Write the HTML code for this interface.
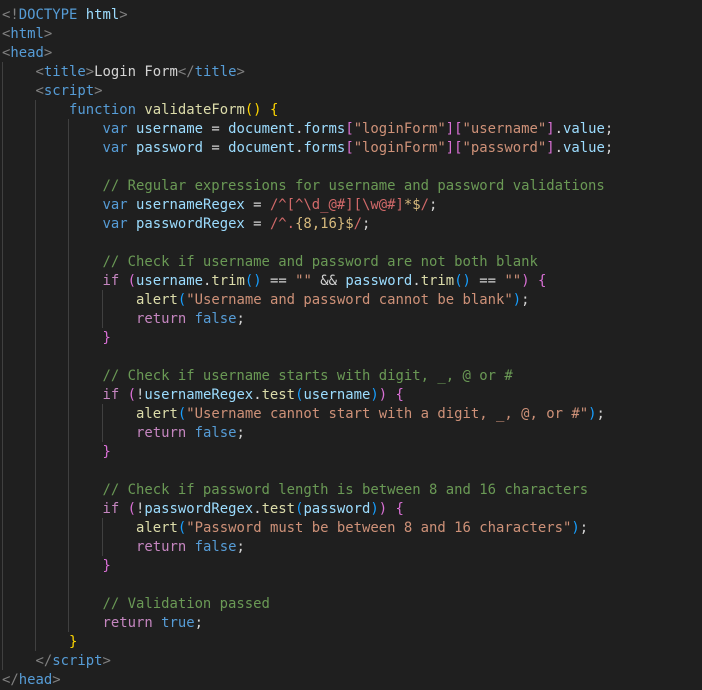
<!DOCTYPE html>
<html><head><style>
html,body{margin:0;background:#1f1f1f;width:702px;height:690px;overflow:hidden}
pre{margin:0;position:absolute;top:6px;left:2px;font-family:"DejaVu Sans Mono","Liberation Mono",monospace;font-size:13.92px;line-height:19px;color:#d4d4d4}
.g{position:absolute;width:1px;background:#404040}
.p{color:#808080}.t{color:#569cd6}.k{color:#569cd6}.f{color:#dcdcaa}.v{color:#9cdcfe}.c{color:#6a9955}.s{color:#ce9178}.r{color:#d16969}.q{color:#d7ba7d}.m{color:#c586c0}.y{color:#ffd700}.o{color:#da70d6}.b{color:#179fff}.w{color:#d4d4d4}
</style></head><body>
<div class="g" style="left:2px;top:62px;height:608px"></div>
<div class="g" style="left:35px;top:100px;height:551px"></div>
<div class="g" style="left:68px;top:119px;height:513px"></div>
<div class="g" style="left:102px;top:290px;height:38px"></div>
<div class="g" style="left:102px;top:404px;height:38px"></div>
<div class="g" style="left:102px;top:518px;height:38px"></div>
<pre><span class="p">&lt;!</span><span class="t">DOCTYPE</span> <span class="v">html</span><span class="p">&gt;</span>
<span class="p">&lt;</span><span class="t">html</span><span class="p">&gt;</span>
<span class="p">&lt;</span><span class="t">head</span><span class="p">&gt;</span>
    <span class="p">&lt;</span><span class="t">title</span><span class="p">&gt;</span>Login Form<span class="p">&lt;/</span><span class="t">title</span><span class="p">&gt;</span>
    <span class="p">&lt;</span><span class="t">script</span><span class="p">&gt;</span>
        <span class="k">function</span> <span class="f">validateForm</span><span class="y">()</span> <span class="y">{</span>
            <span class="k">var</span> <span class="v">username</span> = <span class="v">document</span>.<span class="v">forms</span><span class="o">[</span><span class="s">"loginForm"</span><span class="o">][</span><span class="s">"username"</span><span class="o">]</span>.<span class="v">value</span>;
            <span class="k">var</span> <span class="v">password</span> = <span class="v">document</span>.<span class="v">forms</span><span class="o">[</span><span class="s">"loginForm"</span><span class="o">][</span><span class="s">"password"</span><span class="o">]</span>.<span class="v">value</span>;

            <span class="c">// Regular expressions for username and password validations</span>
            <span class="k">var</span> <span class="v">usernameRegex</span> = <span class="r">/^[^\d_@#][\w@#]</span><span class="q">*$</span><span class="r">/</span>;
            <span class="k">var</span> <span class="v">passwordRegex</span> = <span class="r">/^.</span><span class="q">{8,16}$</span><span class="r">/</span>;

            <span class="c">// Check if username and password are not both blank</span>
            <span class="m">if</span> <span class="o">(</span><span class="v">username</span>.<span class="f">trim</span><span class="b">()</span> == <span class="s">""</span> &amp;&amp; <span class="v">password</span>.<span class="f">trim</span><span class="b">()</span> == <span class="s">""</span><span class="o">)</span> <span class="o">{</span>
                <span class="f">alert</span><span class="b">(</span><span class="s">"Username and password cannot be blank"</span><span class="b">)</span>;
                <span class="m">return</span> <span class="k">false</span>;
            <span class="o">}</span>

            <span class="c">// Check if username starts with digit, _, @ or #</span>
            <span class="m">if</span> <span class="o">(</span>!<span class="v">usernameRegex</span>.<span class="f">test</span><span class="b">(</span><span class="v">username</span><span class="b">)</span><span class="o">)</span> <span class="o">{</span>
                <span class="f">alert</span><span class="b">(</span><span class="s">"Username cannot start with a digit, _, @, or #"</span><span class="b">)</span>;
                <span class="m">return</span> <span class="k">false</span>;
            <span class="o">}</span>

            <span class="c">// Check if password length is between 8 and 16 characters</span>
            <span class="m">if</span> <span class="o">(</span>!<span class="v">passwordRegex</span>.<span class="f">test</span><span class="b">(</span><span class="v">password</span><span class="b">)</span><span class="o">)</span> <span class="o">{</span>
                <span class="f">alert</span><span class="b">(</span><span class="s">"Password must be between 8 and 16 characters"</span><span class="b">)</span>;
                <span class="m">return</span> <span class="k">false</span>;
            <span class="o">}</span>

            <span class="c">// Validation passed</span>
            <span class="m">return</span> <span class="k">true</span>;
        <span class="y">}</span>
    <span class="p">&lt;/</span><span class="t">script</span><span class="p">&gt;</span>
<span class="p">&lt;/</span><span class="t">head</span><span class="p">&gt;</span></pre>
</body></html>
